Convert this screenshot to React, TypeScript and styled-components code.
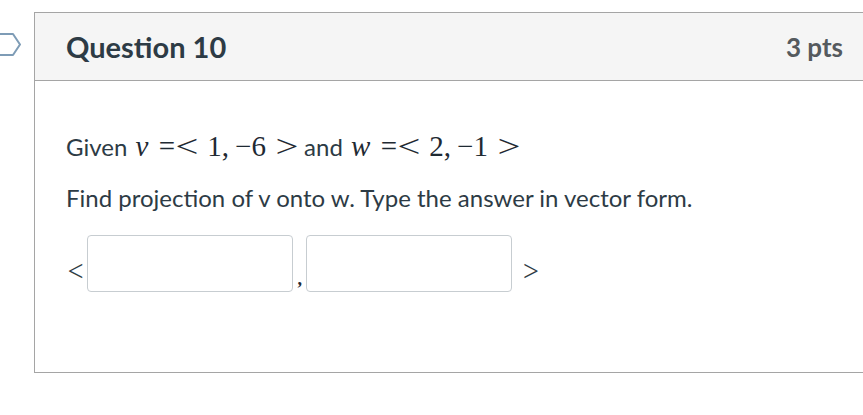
import React from "react";
import styled, { createGlobalStyle } from "styled-components";

const Global = createGlobalStyle`
  html, body { margin: 0; padding: 0; background: #fff; overflow: hidden; }
  body { font-family: Lato, "Liberation Sans", sans-serif; color: #2d3b45; }
`;

const Page = styled.div`
  position: relative;
  padding: 12px 0 0 34px;
  width: 863px;
  height: 415px;
  box-sizing: border-box;
`;

const Flag = styled.svg`
  position: absolute;
  left: 0;
  top: 32px;
`;

const Card = styled.section`
  width: 860px;
  border: 1px solid #a5a5a5;
  border-right: none;
  box-sizing: border-box;
`;

const Header = styled.header`
  display: flex;
  align-items: center;
  justify-content: space-between;
  height: 68px;
  padding: 0 51px 0 31px;
  background: #f5f5f5;
  border-bottom: 1px solid #a5a5a5;
  box-sizing: border-box;
`;

const Title = styled.h2`
  margin: 0;
  font-size: 29px;
  font-weight: 700;
  color: #2d3b45;
`;

const Points = styled.div`
  font-size: 26px;
  font-weight: 700;
  color: #555a5e;
`;

const Body = styled.div`
  height: 291px;
  padding: 51px 0 0 31px;
  box-sizing: border-box;
`;

const Para = styled.p<{ gap?: number }>`
  margin: 0 0 ${(p) => p.gap ?? 0}px;
  font-size: 24px;
  line-height: 30px;
  height: 30px;
  color: #2d3b45;
  white-space: nowrap;
`;

const Math = styled.span`
  font-family: "Liberation Serif", "DejaVu Serif", serif;
  font-size: 29px;
  line-height: 1;
  color: #1f2a33;
`;

const Mi = styled.i`
  font-style: italic;
  margin-left: 2px;
`;

const Rel = styled.span<{ l?: number; r?: number; wide?: boolean }>`
  display: inline-block;
  width: ${(p) => (p.wide ? 22 : 17)}px;
  text-align: center;
  transform: ${(p) => (p.wide ? "scale(1.4, 1.12)" : "none")};
  transform-origin: 50% 65%;
  margin: 0 ${(p) => p.r ?? 8}px 0 ${(p) => p.l ?? 8}px;
`;

const Punct = styled.span`
  margin-right: 6px;
`;

const Row = styled.div`
  display: flex;
  align-items: center;
  margin-top: 22px;
`;

const Bracket = styled.span<{ side: "l" | "r" }>`
  font-family: Lato, sans-serif;
  font-weight: 300;
  font-size: 35px;
  color: #2d3b45;
  line-height: 1;
  padding-top: 12px;
  margin: ${(p) => (p.side === "l" ? "0 1px 0 0" : "0 0 0 8px")};
`;

const Input = styled.input`
  width: 206px;
  height: 57px;
  box-sizing: border-box;
  border: 1px solid #c7cdd1;
  border-radius: 4px;
  background: #fff;
  outline: none;
`;

const Comma = styled.span`
  font-family: "Liberation Serif", serif;
  font-size: 18px;
  font-weight: 700;
  color: #1f2a33;
  align-self: flex-end;
  padding-bottom: 2px;
  width: 13px;
  text-align: center;
`;

function Vec({ name, a, b }: { name: string; a: string; b: string }) {
  return (
    <Math>
      <Mi>{name}</Mi>
      <Rel l={10} r={1}>=</Rel>
      <Rel wide l={0} r={9}>&lt;</Rel>
      {a}
      <Punct>,</Punct>
      {b}
      <Rel wide l={10} r={0}>&gt;</Rel>
    </Math>
  );
}

export default function App() {
  return (
    <>
      <Global />
      <Page>
        <Flag width="22" height="26" viewBox="0 0 22 26">
          <path d="M-2 2 H13 L20 12.5 L13 23 H-2" fill="none" stroke="#7e9cb6" strokeWidth="2" strokeLinejoin="round" />
        </Flag>
        <Card>
          <Header>
            <Title>Question 10</Title>
            <Points>3 pts</Points>
          </Header>
          <Body>
            <Para gap={21}>
              Given <Vec name="v" a="1" b="−6" /> and <Vec name="w" a="2" b="−1" />
            </Para>
            <Para>Find projection of v onto w. Type the answer in vector form.</Para>
            <Row>
              <Bracket side="l">&lt;</Bracket>
              <Input />
              <Comma>,</Comma>
              <Input />
              <Bracket side="r">&gt;</Bracket>
            </Row>
          </Body>
        </Card>
      </Page>
    </>
  );
}
